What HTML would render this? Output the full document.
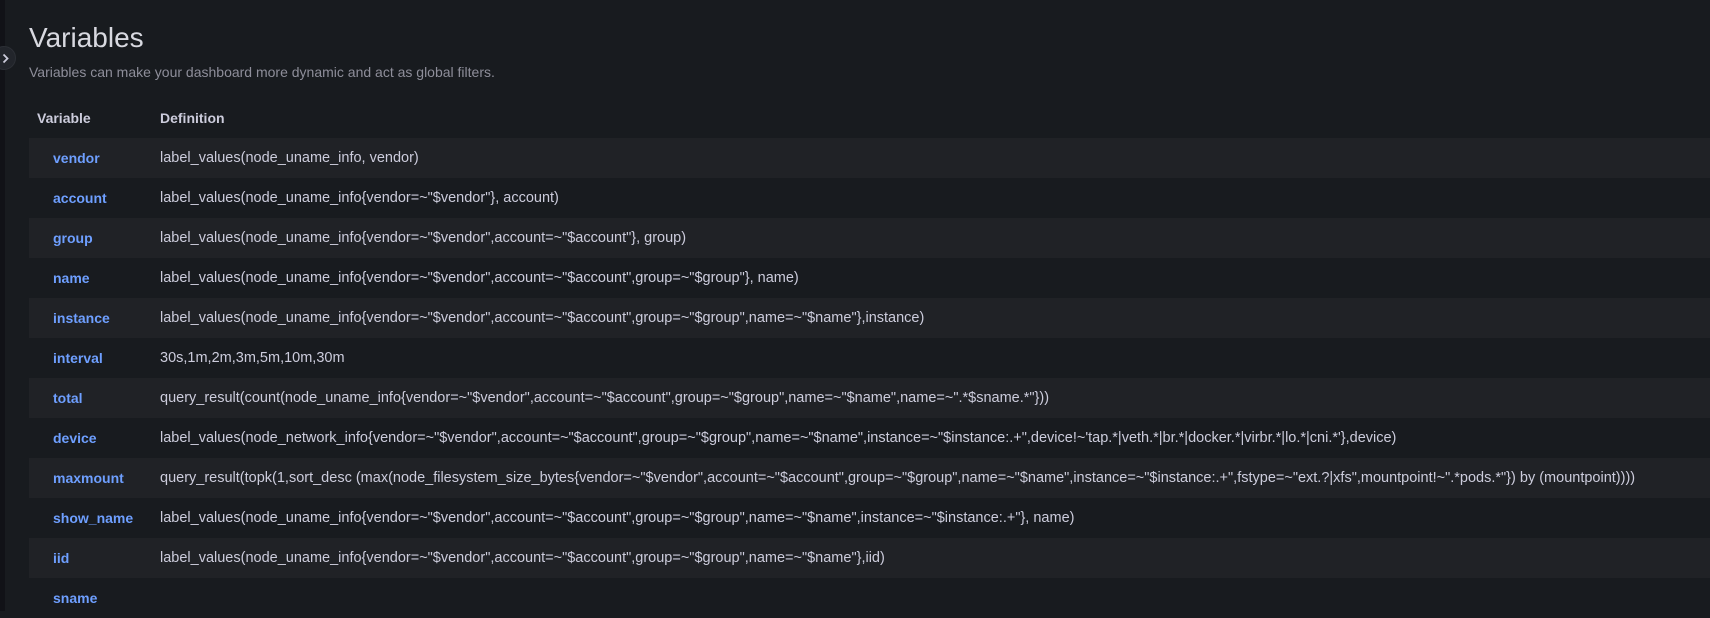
<!DOCTYPE html>
<html><head><meta charset="utf-8"><style>
html,body{margin:0;padding:0;background:#181b1f;width:1710px;height:611px;overflow:hidden;font-family:"Liberation Sans",sans-serif;color:#ccccdc}
.side{position:absolute;left:0;top:0;width:5px;height:611px;background:#111217}
.tog{position:absolute;left:-8px;top:46px;width:24px;height:24px;border-radius:50%;background:#22252b;border:1px solid #2c2f35;box-sizing:border-box}
.tog svg{position:absolute;left:9px;top:6px}
h1{position:absolute;left:29px;top:22px;margin:0;font-weight:400;font-size:28px;color:#d8d9e0}
.sub{position:absolute;left:29px;top:64px;font-size:14px;color:#8e8e9a}
table{position:absolute;left:29px;top:98px;width:1681px;border-collapse:collapse;font-size:14.5px}
th{text-align:left;font-weight:700;height:40px;padding:0;color:#ccccdc;font-size:14px}
th:first-child{padding-left:8px;width:123px}
td{height:40px;padding:0;white-space:nowrap}
td:first-child{padding-left:24px;color:#6e9fff;font-weight:700;font-size:14px}
tbody tr:nth-child(odd){background:#202226}
</style></head><body>
<div class="side"></div>
<div class="tog"><svg width="7" height="11" viewBox="0 0 7 11"><path d="M1.5 1.5L5.5 5.5L1.5 9.5" stroke="#ccccdc" stroke-width="1.8" fill="none"/></svg></div>
<h1>Variables</h1>
<div class="sub">Variables can make your dashboard more dynamic and act as global filters.</div>
<table><thead><tr><th>Variable</th><th>Definition</th></tr></thead><tbody>
<tr><td>vendor</td><td>label_values(node_uname_info, vendor)</td></tr>
<tr><td>account</td><td>label_values(node_uname_info{vendor=~"$vendor"}, account)</td></tr>
<tr><td>group</td><td>label_values(node_uname_info{vendor=~"$vendor",account=~"$account"}, group)</td></tr>
<tr><td>name</td><td>label_values(node_uname_info{vendor=~"$vendor",account=~"$account",group=~"$group"}, name)</td></tr>
<tr><td>instance</td><td>label_values(node_uname_info{vendor=~"$vendor",account=~"$account",group=~"$group",name=~"$name"},instance)</td></tr>
<tr><td>interval</td><td>30s,1m,2m,3m,5m,10m,30m</td></tr>
<tr><td>total</td><td>query_result(count(node_uname_info{vendor=~"$vendor",account=~"$account",group=~"$group",name=~"$name",name=~".*$sname.*"}))</td></tr>
<tr><td>device</td><td>label_values(node_network_info{vendor=~"$vendor",account=~"$account",group=~"$group",name=~"$name",instance=~"$instance:.+",device!~'tap.*|veth.*|br.*|docker.*|virbr.*|lo.*|cni.*'},device)</td></tr>
<tr><td>maxmount</td><td>query_result(topk(1,sort_desc (max(node_filesystem_size_bytes{vendor=~"$vendor",account=~"$account",group=~"$group",name=~"$name",instance=~"$instance:.+",fstype=~"ext.?|xfs",mountpoint!~".*pods.*"}) by (mountpoint))))</td></tr>
<tr><td>show_name</td><td>label_values(node_uname_info{vendor=~"$vendor",account=~"$account",group=~"$group",name=~"$name",instance=~"$instance:.+"}, name)</td></tr>
<tr><td>iid</td><td>label_values(node_uname_info{vendor=~"$vendor",account=~"$account",group=~"$group",name=~"$name"},iid)</td></tr>
<tr><td>sname</td><td></td></tr>
</tbody></table>
</body></html>
